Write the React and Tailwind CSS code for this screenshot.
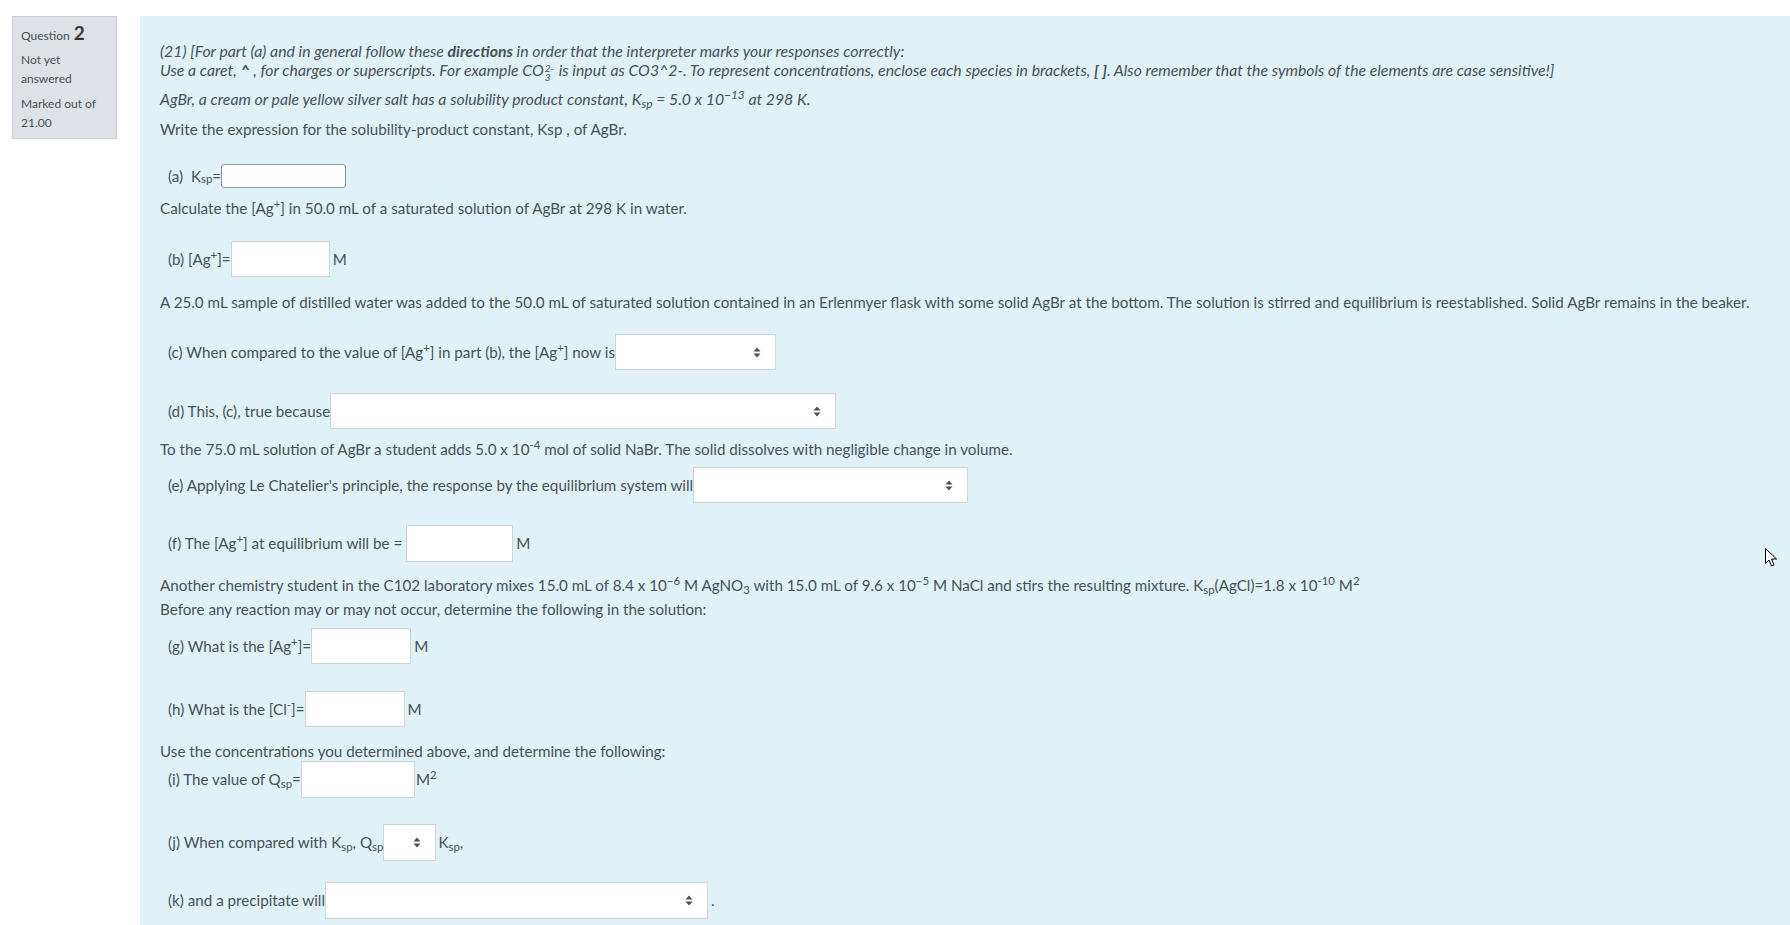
import React from 'react'

const font = { fontFamily: 'Lato, "Open Sans", sans-serif' }

function Arrows() {
	return (
		<svg width="8" height="11" viewBox="0 0 8 11" className="shrink-0">
			<path d="M4 0.5 L7.5 4.5 L0.5 4.5 Z" fill="#495057" />
			<path d="M4 10.5 L7.5 6.5 L0.5 6.5 Z" fill="#495057" />
		</svg>
	)
}

function Box({ className }) {
	return <span className={'inline-block shrink-0 border border-[#ced4da] bg-white ' + className} />
}

function Select({ className }) {
	return (
		<span
			className={
				'flex shrink-0 items-center justify-end border border-[#ced4da] bg-white pr-[14px] ' + className
			}
		>
			<Arrows />
		</span>
	)
}

function Cursor() {
	return (
		<svg
			width="13"
			height="21"
			viewBox="0 0 13 21"
			className="pointer-events-none absolute left-[1765px] top-[548px]"
		>
			<path
				d="M0.5 0.5 L0.5 15.5 L4 12 L6.5 18 L9 17 L6.5 11 L11.5 11 Z"
				fill="#fff"
				stroke="#000"
				strokeWidth="1"
			/>
		</svg>
	)
}

export default function App() {
	return (
		<div
			className="relative flex h-[925px] w-full overflow-hidden bg-white text-[15.2px] text-[#495057]"
			style={font}
		>
			<div className="ml-[12px] mt-[16px] w-[105px] shrink-0 self-start border border-[#cad0d7] bg-[#dee2e6] px-[8px] pb-[6px] pt-[6px] text-[12px] leading-[19px]">
				<div className="flex items-baseline gap-[4px]">
					<span>Question</span>
					<span className="text-[19px] font-bold text-[#373a3c]">2</span>
				</div>
				<div className="mt-[5px]">Not yet answered</div>
				<div className="mt-[6px]">Marked out of 21.00</div>
			</div>

			<div className="ml-[23px] mt-[16px] flex min-w-0 flex-1 flex-col bg-[#def2f8] pl-[20px] pt-[25px]">
				<div className="text-[15.8px] italic leading-[19px]">
					(21) [For part (a) and in general follow these <b>directions</b> in order that the
					interpreter marks your responses correctly:
					<br />
					Use a caret, <b>^</b> , for charges or superscripts. For example CO
					<span className="mx-[1px] -my-[5px] inline-flex translate-y-[1px] flex-col align-middle text-[10px] leading-[9px]">
						<span>2-</span>
						<span>3</span>
					</span>{' '}
					is input as CO3^2-. To represent concentrations, enclose each species in brackets,{' '}
					<b>[ ]</b>. Also remember that the symbols of the elements are case sensitive!]
				</div>
				<div className="mt-[10px] text-[15.8px] italic leading-[20px]">
					AgBr, a cream or pale yellow silver salt has a solubility product constant, K
					<sub>sp</sub> = 5.0 x 10<sup>−13</sup> at 298 K.
				</div>
				<div className="mt-[10px] leading-[20px]">
					Write the expression for the solubility-product constant, Ksp , of AgBr.
				</div>

				<div className="mt-[25px] flex h-[24px] items-center pl-[8px]">
					<span className="whitespace-pre">(a)  K</span>
					<sub>sp</sub>
					<span>=</span>
					<span className="inline-block h-[24px] w-[125px] shrink-0 rounded-[3px] border border-[#8f959e] bg-white" />
				</div>
				<div className="mt-[10px] leading-[20px]">
					Calculate the [Ag<sup>+</sup>] in 50.0 mL of a saturated solution of AgBr at 298 K in
					water.
				</div>

				<div className="mt-[23px] flex h-[36px] items-center whitespace-pre pl-[8px]">
					<span>
						(b) [Ag<sup>+</sup>]=
					</span>
					<Box className="h-[36px] w-[99px]" />
					<span className="ml-[3px]">M</span>
				</div>
				<div className="mt-[15px] leading-[20px]">
					A 25.0 mL sample of distilled water was added to the 50.0 mL of saturated solution
					contained in an Erlenmyer flask with some solid AgBr at the bottom. The solution is stirred
					and equilibrium is reestablished. Solid AgBr remains in the beaker.
				</div>

				<div className="mt-[22px] flex h-[36px] items-center whitespace-pre pl-[8px]">
					<span>
						(c) When compared to the value of [Ag<sup>+</sup>] in part (b), the [Ag<sup>+</sup>] now
						is
					</span>
					<Select className="h-[36px] w-[161px]" />
				</div>

				<div className="mt-[23px] flex h-[36px] items-center whitespace-pre pl-[8px]">
					<span>(d) This, (c), true because</span>
					<Select className="h-[36px] w-[506px]" />
				</div>
				<div className="mt-[10px] leading-[20px]">
					To the 75.0 mL solution of AgBr a student adds 5.0 x 10<sup>-4</sup> mol of solid NaBr.
					The solid dissolves with negligible change in volume.
				</div>

				<div className="mt-[8px] flex h-[36px] items-center whitespace-pre pl-[8px]">
					<span>(e) Applying Le Chatelier's principle, the response by the equilibrium system will</span>
					<Select className="h-[36px] w-[275px]" />
				</div>

				<div className="mt-[22px] flex h-[37px] items-center whitespace-pre pl-[8px]">
					<span>
						(f) The [Ag<sup>+</sup>] at equilibrium will be ={' '}
					</span>
					<Box className="h-[37px] w-[107px]" />
					<span className="ml-[3px]">M</span>
				</div>

				<div className="mt-[11px] leading-[24px]">
					Another chemistry student in the C102 laboratory mixes 15.0 mL of 8.4 x 10<sup>−6</sup> M
					AgNO<sub>3</sub> with 15.0 mL of 9.6 x 10<sup>−5</sup> M NaCl and stirs the resulting
					mixture. K<sub>sp</sub>(AgCl)=1.8 x 10<sup>-10</sup> M<sup>2</sup>
					<br />
					Before any reaction may or may not occur, determine the following in the solution:
				</div>

				<div className="mt-[7px] flex h-[36px] items-center whitespace-pre pl-[8px]">
					<span>
						(g) What is the [Ag<sup>+</sup>]=
					</span>
					<Box className="h-[36px] w-[100px]" />
					<span className="ml-[3px]">M</span>
				</div>

				<div className="mt-[27px] flex h-[36px] items-center whitespace-pre pl-[8px]">
					<span>
						(h) What is the [Cl<sup>-</sup>]=
					</span>
					<Box className="h-[36px] w-[100px]" />
					<span className="ml-[3px]">M</span>
				</div>

				<div className="mt-[14px] leading-[20px]">
					Use the concentrations you determined above, and determine the following:
				</div>

				<div className="mt-[0px] flex h-[37px] items-center whitespace-pre pl-[8px]">
					<span>
						(i) The value of Q<sub>sp</sub>=
					</span>
					<Box className="h-[37px] w-[114px]" />
					<span className="ml-[1px]">
						M<sup>2</sup>
					</span>
				</div>

				<div className="mt-[26px] flex h-[37px] items-center whitespace-pre pl-[8px]">
					<span>
						(j) When compared with K<sub>sp</sub>, Q<sub>sp</sub>
					</span>
					<Select className="h-[37px] w-[53px]" />
					<span className="ml-[2px]">
						K<sub>sp</sub>,
					</span>
				</div>

				<div className="mt-[21px] flex h-[37px] items-center whitespace-pre pl-[8px]">
					<span>(k) and a precipitate will</span>
					<Select className="h-[37px] w-[383px]" />
					<span className="ml-[3px]">.</span>
				</div>
			</div>
			<Cursor />
		</div>
	)
}
